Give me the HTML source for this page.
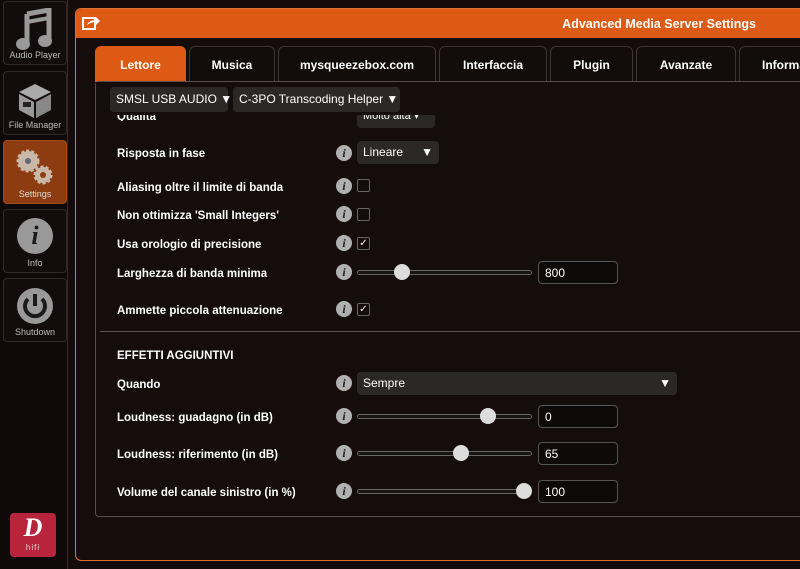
<!DOCTYPE html>
<html><head><meta charset="utf-8"><style>
*{box-sizing:border-box;margin:0;padding:0}
html,body{width:800px;height:569px;overflow:hidden}
body{background:#130c0b;font-family:"Liberation Sans","DejaVu Sans",sans-serif;color:#fff;position:relative}
#w{position:absolute;left:0;top:0;width:800px;height:569px;overflow:hidden}
.abs{position:absolute}
.side{left:0;top:0;width:68px;height:569px;border-right:1px solid #3a2a24;background:#0f0a09}
.si{position:absolute;left:3px;width:64px;height:64px;border:1px solid #2e2a28;border-radius:4px;background:#120d0c;text-align:center;font-size:9px;color:#bbb}
.si span{position:absolute;left:0;right:0;bottom:4px}
.panel{left:75px;top:8px;width:740px;height:553px;border:1.5px solid #e0702e;border-radius:6px;background:#140d0c}
.hdr{left:76px;top:9px;width:724px;height:29px;background:#dc5a14;border-radius:5px 0 0 0}
.hdr b{position:absolute;right:44px;top:8px;font-size:12.5px}
.tab{position:absolute;top:46px;height:36px;border:1px solid #3c3533;border-bottom:none;border-radius:6px 6px 0 0;font-size:12px;font-weight:bold;text-align:center;line-height:36px;background:#120c0b;white-space:nowrap;overflow:hidden}
.box{left:95px;top:81px;width:720px;height:436px;border:1px solid #55504e;border-radius:4px}
.sel{position:absolute;background:#2c2826;border-radius:4px;font-size:12px;color:#fff;padding-left:6px;white-space:nowrap}
.lab{position:absolute;left:117px;font-size:11.5px;font-weight:bold;white-space:nowrap;margin-top:3px}
.inf{position:absolute;left:336px;width:16px;height:16px;border-radius:50%;background:#b0b0b0;color:#222;font:bold italic 12px "Liberation Serif",serif;text-align:center;line-height:16px}
.cb{position:absolute;left:357px;width:13px;height:13px;border:1px solid #666;border-radius:2px;font-size:10px;line-height:11px;text-align:center;color:#fff}
.tr{position:absolute;left:357px;width:175px;height:5px;border:1px solid #666;border-radius:3px;background:#1a1413}
.th{position:absolute;width:16px;height:16px;border-radius:50%;background:#ddd}
.num{position:absolute;left:538px;width:80px;height:23px;border:1px solid #555;border-radius:4px;background:#0e0a09;font-size:12px;padding:4px 6px}
</style></head><body><div id="w">
<div class="abs side"></div>
<div class="si" style="top:1px"><svg width="40" height="44" style="margin-top:6px" viewBox="0 0 40 44"><path d="M12 6 L34 2 V32" stroke="#999" stroke-width="5" fill="none"/><path d="M12 6 V36" stroke="#999" stroke-width="5"/><path d="M12 14 L34 10" stroke="#999" stroke-width="4"/><ellipse cx="8" cy="36" rx="7" ry="6" fill="#999"/><ellipse cx="30" cy="33" rx="7" ry="6" fill="#999"/></svg><span>Audio Player</span></div>
<div class="si" style="top:71px"><svg width="40" height="40" style="margin-top:8px" viewBox="0 0 40 40"><path d="M4 12 L20 4 L36 12 L20 20Z" fill="#aaa"/><path d="M4 14 L19 22 V38 L4 30Z" fill="#999"/><path d="M21 22 L36 14 V30 L21 38Z" fill="#888"/><rect x="8" y="22" width="8" height="5" fill="#222"/></svg><span>File Manager</span></div>
<div class="si" style="top:140px;background:#8c3c10;border-color:#a04a18;color:#ddd"><svg width="44" height="40" style="margin-top:6px" viewBox="0 0 44 40"><circle cx="15" cy="14" r="10" fill="#c8b8a8" stroke="#c8b8a8" stroke-width="3" stroke-dasharray="3 2"/><circle cx="15" cy="14" r="3" fill="#667"/><circle cx="30" cy="28" r="8" fill="#c8b8a8" stroke="#c8b8a8" stroke-width="3" stroke-dasharray="3 2"/><circle cx="30" cy="28" r="3" fill="#8c3c10"/></svg><span>Settings</span></div>
<div class="si" style="top:209px"><div style="width:36px;height:36px;border-radius:50%;background:#999;margin:8px auto 0;color:#1a1a1a;font:bold italic 26px 'Liberation Serif',serif;line-height:36px">i</div><span>Info</span></div>
<div class="si" style="top:278px"><svg width="38" height="38" style="margin-top:8px" viewBox="0 0 38 38"><circle cx="19" cy="19" r="18" fill="#999"/><path d="M12 12 A10 10 0 1 0 26 12" stroke="#1a1a1a" stroke-width="4" fill="none"/><path d="M19 7 V19" stroke="#1a1a1a" stroke-width="4"/></svg><span>Shutdown</span></div>
<div class="abs" style="left:10px;top:513px;width:46px;height:44px;background:#b8243a;border-radius:4px;text-align:center"><div style="font:bold italic 26px 'Liberation Serif',serif;line-height:30px">D</div><div style="font-size:8px;color:#ddd;letter-spacing:1px">hifi</div></div>

<div class="abs panel"></div>
<div class="abs hdr"><svg class="abs" style="left:6px;top:6px" width="18" height="16" viewBox="0 0 18 16"><rect x="1" y="3" width="12" height="11" fill="none" stroke="#fff" stroke-width="2"/><path d="M5 10 Q7 5 14 5 V2 L18 6 L14 10 V7 Q9 7 5 10Z" fill="#fff"/></svg><b>Advanced Media Server Settings</b></div>

<div class="tab" style="left:95px;width:91px;background:#dc5a14;border-color:#dc5a14">Lettore</div>
<div class="tab" style="left:189px;width:86px">Musica</div>
<div class="tab" style="left:278px;width:158px">mysqueezebox.com</div>
<div class="tab" style="left:439px;width:108px">Interfaccia</div>
<div class="tab" style="left:550px;width:83px">Plugin</div>
<div class="tab" style="left:636px;width:100px">Avanzate</div>
<div class="tab" style="left:739px;width:61px;text-align:left;padding-left:22px;border-right:none;border-radius:6px 0 0 0">Informazioni</div>
<div class="abs box"></div>

<div class="sel" style="left:357px;top:110px;width:78px;height:18px;line-height:12px;font-size:11px">Molto alta ▾</div>
<div class="lab" style="top:108px;height:10px;overflow:hidden">Qualità</div>
<div class="abs" style="left:96px;top:82px;width:704px;height:33px;background:#140d0c"></div>
<div class="sel" style="left:110px;top:87px;width:118px;height:25px;line-height:25px">SMSL USB AUDIO ▼</div>
<div class="sel" style="left:233px;top:87px;width:167px;height:25px;line-height:25px">C-3PO Transcoding Helper ▼</div>

<div class="lab" style="top:145px">Risposta in fase</div><div class="inf" style="top:145px">i</div>
<div class="sel" style="left:357px;top:141px;width:82px;height:23px;line-height:23px">Lineare<span style="position:absolute;right:6px">▼</span></div>
<div class="lab" style="top:179px">Aliasing oltre il limite di banda</div><div class="inf" style="top:178px">i</div><div class="cb" style="top:179px"></div>
<div class="lab" style="top:207px">Non ottimizza 'Small Integers'</div><div class="inf" style="top:206px">i</div><div class="cb" style="top:208px"></div>
<div class="lab" style="top:236px">Usa orologio di precisione</div><div class="inf" style="top:235px">i</div><div class="cb" style="top:237px">✓</div>
<div class="lab" style="top:265px">Larghezza di banda minima</div><div class="inf" style="top:264px">i</div>
<div class="tr" style="top:270px"></div><div class="th" style="left:394px;top:264px"></div><div class="num" style="top:261px">800</div>
<div class="lab" style="top:302px">Ammette piccola attenuazione</div><div class="inf" style="top:301px">i</div><div class="cb" style="top:303px">✓</div>
<div class="abs" style="left:100px;top:331px;width:700px;height:1px;background:#5a5554"></div>
<div class="lab" style="top:347px">EFFETTI AGGIUNTIVI</div>
<div class="lab" style="top:376px">Quando</div><div class="inf" style="top:375px">i</div>
<div class="sel" style="left:357px;top:372px;width:320px;height:23px;line-height:23px">Sempre<span style="position:absolute;right:6px">▼</span></div>
<div class="lab" style="top:409px">Loudness: guadagno (in dB)</div><div class="inf" style="top:408px">i</div>
<div class="tr" style="top:414px"></div><div class="th" style="left:480px;top:408px"></div><div class="num" style="top:405px">0</div>
<div class="lab" style="top:446px">Loudness: riferimento (in dB)</div><div class="inf" style="top:445px">i</div>
<div class="tr" style="top:451px"></div><div class="th" style="left:453px;top:445px"></div><div class="num" style="top:442px">65</div>
<div class="lab" style="top:484px">Volume del canale sinistro (in %)</div><div class="inf" style="top:483px">i</div>
<div class="tr" style="top:489px"></div><div class="th" style="left:516px;top:483px"></div><div class="num" style="top:480px">100</div>
</div></body></html>
